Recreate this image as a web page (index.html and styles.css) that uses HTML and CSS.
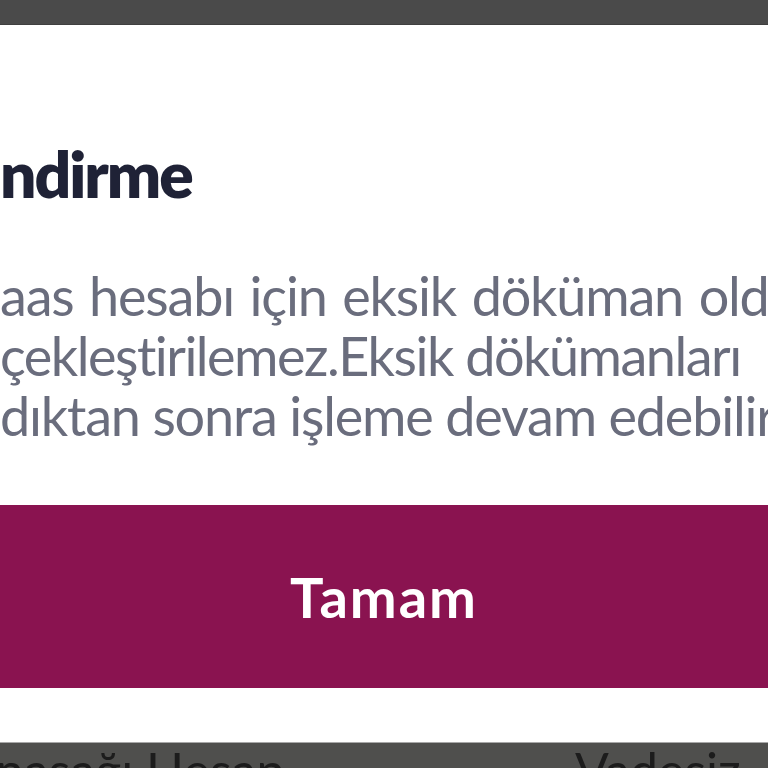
FILE: index.html
```html
<!DOCTYPE html>
<html lang="tr">
<head>
<meta charset="utf-8">
<link rel="stylesheet" href="styles.css">
</head>
<body>
<div class="screen">
  <div class="topbar"></div>
  <div class="dialog">
    <h1 class="title">ndirme</h1>
    <div class="message">
      <p class="line line-wide">aas hesabı için eksik döküman old</p>
      <p class="line line-tight">çekleştirilemez.Eksik dökümanları</p>
      <p class="line">dıktan sonra işleme devam edebilir</p>
    </div>
    <div class="button">Tamam</div>
  </div>
  <div class="underlay">
    <span class="under-left">nasağı Hesap</span>
    <span class="under-right">Vadesiz</span>
  </div>
</div>
</body>
</html>
```

FILE: styles.css
```css
html, body {
  margin: 0;
  padding: 0;
  background: #4c4c4c;
}
.screen {
  width: 768px;
  height: 768px;
  overflow: hidden;
  display: flex;
  flex-direction: column;
  font-family: Lato, "Noto Sans", sans-serif;
}
.topbar {
  height: 25px;
  flex: none;
  background: #4a4a4a;
  border-bottom: 1px solid #3f3f3f;
  box-sizing: border-box;
}
.dialog {
  height: 717px;
  flex: none;
  background: #ffffff;
  display: flex;
  flex-direction: column;
  overflow: hidden;
}
.title {
  margin: 0;
  padding-top: 104px;
  font-size: 64px;
  line-height: 90px;
  font-weight: 800;
  letter-spacing: -2px;
  color: #1f2236;
  white-space: nowrap;
}
.message {
  margin-top: 47px;
  display: flex;
  flex-direction: column;
}
.line {
  margin: 0;
  font-size: 54px;
  line-height: 60px;
  letter-spacing: -1.2px;
  color: #6a6d7d;
  white-space: nowrap;
}
.line-wide {
  word-spacing: 3px;
}
.line-tight {
  letter-spacing: -1.5px;
}
.button {
  margin-top: 59px;
  height: 183px;
  flex: none;
  background: #8a1350;
  color: #ffffff;
  font-size: 56px;
  font-weight: 700;
  display: flex;
  align-items: center;
  justify-content: center;
  letter-spacing: 2px;
}
.underlay {
  flex: 1;
  background: #4f4f4d;
  border-top: 1px solid #a8a8a8;
  display: flex;
  justify-content: space-between;
  color: #1c1c1c;
  font-size: 50px;
  line-height: 54px;
  white-space: nowrap;
  overflow: hidden;
}
.under-left {
  margin-left: -4px;
}
.under-right {
  width: 193px;
}
```
